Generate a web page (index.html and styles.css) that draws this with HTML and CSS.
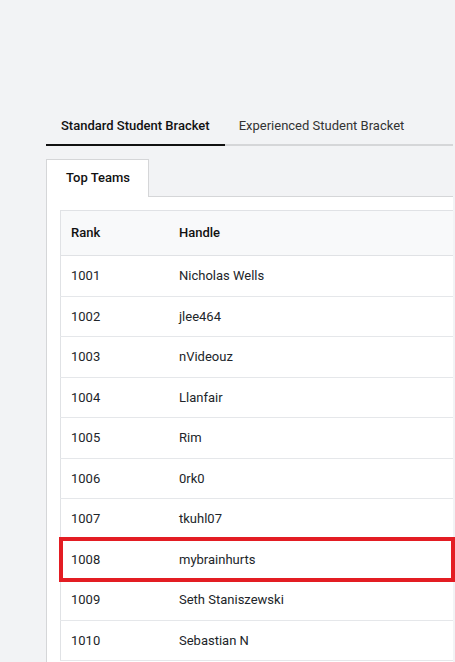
FILE: index.html
```html
<!DOCTYPE html>
<html lang="en">
<head>
    <meta charset="UTF-8">
    <meta name="viewport" content="width=device-width, initial-scale=1.0">
    <title>Leaderboard</title>
    <link rel="stylesheet" href="styles.css">
</head>
<body>
    <div class="page">
        <div class="bracket-tabs">
            <a class="bracket-tab active">Standard Student Bracket</a>
            <a class="bracket-tab">Experienced Student Bracket</a>
        </div>

        <div class="panel-tabs">
            <div class="panel-tab">Top Teams</div>
        </div>
        <div class="panel">
            <table class="board">
                <thead>
                    <tr><th class="rank">Rank</th><th>Handle</th></tr>
                </thead>
                <tbody>
                    <tr><td class="rank">1001</td><td>Nicholas Wells</td></tr>
                    <tr><td class="rank">1002</td><td>jlee464</td></tr>
                    <tr><td class="rank">1003</td><td>nVideouz</td></tr>
                    <tr><td class="rank">1004</td><td>Llanfair</td></tr>
                    <tr><td class="rank">1005</td><td>Rim</td></tr>
                    <tr><td class="rank">1006</td><td>0rk0</td></tr>
                    <tr><td class="rank">1007</td><td>tkuhl07</td></tr>
                    <tr class="mine"><td class="rank">1008</td><td>mybrainhurts</td></tr>
                    <tr><td class="rank">1009</td><td>Seth Staniszewski</td></tr>
                    <tr><td class="rank">1010</td><td>Sebastian N</td></tr>
                </tbody>
            </table>
        </div>
    </div>
</body>
</html>
```

FILE: styles.css
```css
body {
    margin: 0;
    background: #f2f3f5;
    font-family: Roboto, "Liberation Sans", Arial, sans-serif;
    font-size: 13px;
    color: #212529;
    overflow: hidden;
}
.page {
    width: 407px;
    margin-left: 46px;
    padding-top: 108px;
}
.bracket-tabs {
    display: flex;
    border-bottom: 2px solid #d5d6d8;
}
.bracket-tab {
    padding: 10px 15px;
    line-height: 16px;
    color: #333;
    margin-bottom: -2px;
    border-bottom: 2px solid transparent;
    white-space: nowrap;
}
.bracket-tab.active {
    font-weight: 500;
    color: #111;
    border-bottom-color: #111;
}
.bracket-tab + .bracket-tab {
    padding-left: 14px;
}
.panel-tabs {
    display: flex;
    margin-top: 13px;
    border-bottom: 1px solid #d5d6d8;
}
.panel-tab {
    padding: 10px 18px 11px 19px;
    line-height: 16px;
    white-space: nowrap;
    font-weight: 500;
    color: #111;
    background: #fff;
    border: 1px solid #d5d6d8;
    border-bottom: none;
    margin-bottom: -1px;
}
.panel {
    background: #fff;
    border-left: 1px solid #d5d6d8;
    padding: 13px 0 0 13px;
    height: 600px;
}
.board {
    width: 100%;
    border-collapse: collapse;
    border: 1px solid #e0e2e5;
    border-right: none;
}
.board th {
    text-align: left;
    font-weight: 500;
    color: #111;
    background: #f8f9fa;
    padding: 14px 10px;
    line-height: 16px;
    border-bottom: 1px solid #e0e2e5;
}
.board td {
    padding: 12px 10px;
    line-height: 15.5px;
    border-bottom: 1px solid #e5e7ea;
}
.board .rank {
    width: 88px;
}
.board .mine {
    outline: 4px solid #e31d23;
    outline-offset: -2px;
}
```
